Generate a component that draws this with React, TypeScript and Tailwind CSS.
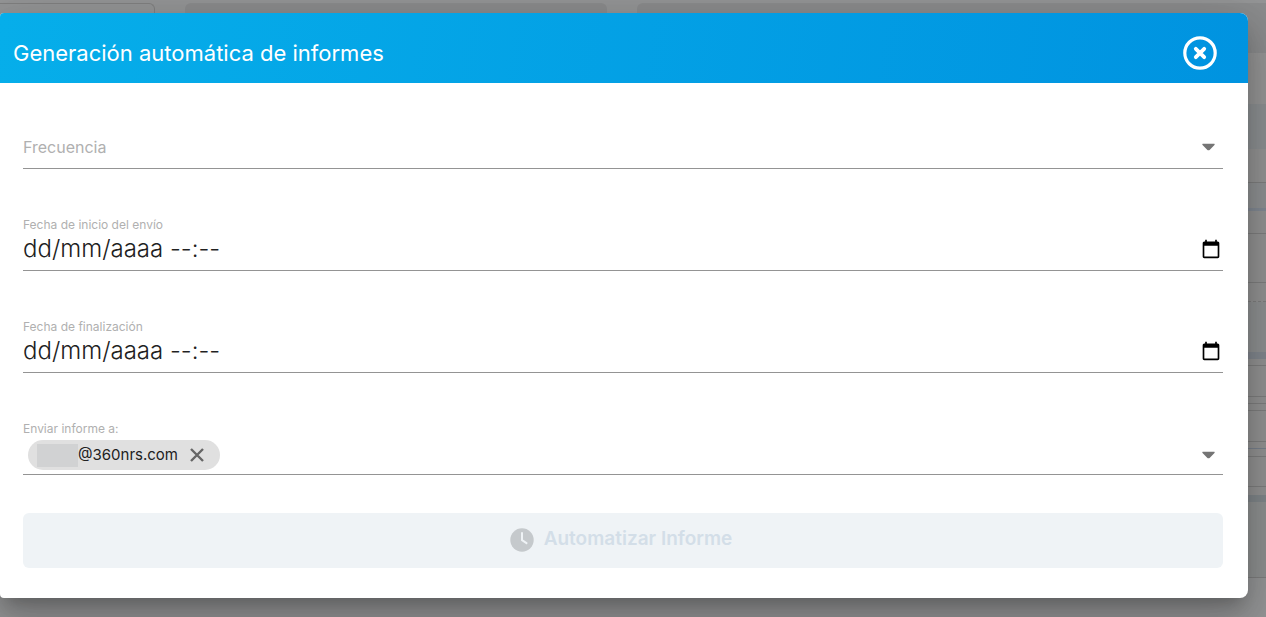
import type { ReactNode } from "react";
import { clsx } from "clsx";

// Strips of the report page that stay visible beside the dialog
const pageStrips = [
  "h-[51px] bg-[#959595]",
  "h-[45px] bg-[#8c8f91]",
  "h-[34px] bg-[#939393] border-b border-[#7e7e7e]",
  "h-[25px] bg-[#8e9092]",
  "h-[3px] bg-[#828993]",
  "h-[23px] bg-[#929292] border-b border-[#7e7e7e]",
  "h-[49px] bg-[#929292] border-b border-[#7e7e7e]",
  "h-[19px] bg-[#929292] border-b border-dashed border-[#7e7e7e]",
  "h-[50px] bg-[#8e9091]",
  "h-[7px] bg-[#82878e]",
  "h-[7px] bg-[#929292] border-b border-[#7e7e7e]",
  "h-[31px] bg-[#929292] border-b border-[#7e7e7e]",
  "h-[7px] bg-[#929292] border-b border-[#7e7e7e]",
  "h-[7px] bg-[#929292] border-b border-[#7e7e7e]",
  "h-[31px] bg-[#929292] border-b border-[#7e7e7e]",
  "h-[7px] bg-[#929292] border-b border-[#78808c]",
  "h-[8px] bg-[#929292] border-b border-[#7e7e7e]",
  "h-[30px] bg-[#929292] border-b border-[#7e7e7e]",
  "h-[8px] bg-[#929292]",
  "h-[7px] bg-[#80868a]",
  "h-[76px] bg-[#8e9090] border-b border-[#7e7e7e]",
];

function PageBehind() {
  return (
    <div aria-hidden="true" className="col-start-1 row-start-1 flex min-w-0 flex-col bg-[#949596] pt-[3px]">
      <div className="flex h-[50px] gap-[30px]">
        <div className="w-[155px] rounded-tr-md border-t border-r border-[#808080]" />
        <div className="w-1/3 rounded-t-md bg-[#8b8c8d]" />
        <div className="flex-1 rounded-tl-md bg-[#8b8c8d]" />
      </div>
      {pageStrips.map((strip, i) => (
        <div key={i} className={clsx("shrink-0", strip)} />
      ))}
    </div>
  );
}

function CaretIcon() {
  return (
    <svg viewBox="0 0 14 8" className="pointer-events-none mr-2 h-2 w-[13px] shrink-0 fill-[#757575]" aria-hidden="true">
      <path d="M1.2 .4h11.6c.9 0 1.2.8.6 1.4L8.2 7.1c-.7.7-1.7.7-2.4 0L.6 1.8C0 1.2.3.4 1.2.4Z" />
    </svg>
  );
}

function CalendarIcon() {
  return (
    <svg viewBox="0 0 24 24" className="h-5 w-5 fill-black" aria-hidden="true">
      <path d="M20 3h-1V1h-2v2H7V1H5v2H4c-1.1 0-2 .9-2 2v16c0 1.1.9 2 2 2h16c1.1 0 2-.9 2-2V5c0-1.1-.9-2-2-2zm0 18H4V8h16v13z" />
    </svg>
  );
}

type FieldProps = {
  id: string;
  label?: string;
  rowClassName?: string;
  children: ReactNode;
};

function Field({ id, label, rowClassName = "h-8", children }: FieldProps) {
  return (
    <div className="flex h-[54px] flex-col border-b border-[#949494]">
      <label htmlFor={id} className="h-4 text-xs leading-4 text-[#b0b0b0]">
        {label}
      </label>
      <div className={clsx("flex items-center", rowClassName)}>{children}</div>
    </div>
  );
}

function DateField({ id, label }: { id: string; label: string }) {
  return (
    <Field id={id} label={label}>
      <input
        id={id}
        type="text"
        placeholder="dd/mm/aaaa --:--"
        className="h-8 min-w-0 flex-1 bg-transparent text-2xl font-light text-[#212121] outline-none placeholder:text-[#212121]"
      />
      <button type="button" aria-label="Abrir calendario" className="mr-0.5">
        <CalendarIcon />
      </button>
    </Field>
  );
}

export default function App() {
  return (
    <div className="grid min-h-screen overflow-hidden font-['Inter','Open_Sans',sans-serif]">
      <PageBehind />
      <div
        role="dialog"
        aria-labelledby="dialog-title"
        className="col-start-1 row-start-1 mt-[13px] mr-[18px] mb-[19px] flex flex-col self-start overflow-hidden rounded-l-sm rounded-r-lg bg-white shadow-[0_11px_15px_-7px_rgba(0,0,0,0.2),0_24px_38px_3px_rgba(0,0,0,0.14),0_9px_46px_8px_rgba(0,0,0,0.12)]"
      >
        <header className="flex h-[70px] items-center justify-between bg-linear-[100deg] from-[#06aeea] to-[#0093e0] pt-3 pr-[31px] pb-0.5 pl-[13px] text-white">
          <h1 id="dialog-title" className="text-[22px] leading-8">
            Generación automática de informes
          </h1>
          <button type="button" aria-label="Cerrar">
            <svg viewBox="0 0 34 34" className="h-[34px] w-[34px]" fill="none" stroke="currentColor" aria-hidden="true">
              <circle cx="17" cy="17" r="15.2" strokeWidth="3.2" />
              <path d="m12.8 12.8 8.4 8.4m0-8.4-8.4 8.4" strokeWidth="3.8" strokeLinecap="round" />
            </svg>
          </button>
        </header>

        <form className="flex flex-col gap-12 pt-8 pr-[25px] pb-[30px] pl-[23px]">
          <Field id="frequency">
            <select
              id="frequency"
              aria-label="Frecuencia"
              defaultValue=""
              className="h-8 flex-1 appearance-none bg-transparent text-base text-[#b0b0b0] outline-none"
            >
              <option value="">Frecuencia</option>
            </select>
            <CaretIcon />
          </Field>

          <DateField id="start-date" label="Fecha de inicio del envío" />
          <DateField id="end-date" label="Fecha de finalización" />

          <div className="flex flex-col gap-[38px]">
            <Field id="recipients" label="Enviar informe a:" rowClassName="h-9">
              <span className="ml-[5px] flex h-[30px] items-center rounded-full bg-[#e0e0e0] pr-4 pl-[9px] text-[15px] text-[#212121]">
                <span className="h-[23px] w-[41px] bg-[#d1d2d3]" />
                @360nrs.com
                <button type="button" aria-label="Quitar destinatario" className="ml-3">
                  <svg viewBox="0 0 14 14" className="h-[14px] w-[14px]" stroke="#666" strokeWidth="2.4" aria-hidden="true">
                    <path d="m1 1 12 12M13 1 1 13" />
                  </svg>
                </button>
              </span>
              <select id="recipients" defaultValue="" className="h-8 flex-1 appearance-none bg-transparent outline-none">
                <option value=""></option>
              </select>
              <CaretIcon />
            </Field>

            <button
              type="submit"
              disabled
              className="flex h-[55px] items-center justify-center gap-2.5 rounded-md bg-[#eff3f6] pr-1 pb-0.5 text-[19px] font-semibold text-[#d3dee8]"
            >
              <svg viewBox="0 0 24 24" className="h-6 w-6" aria-hidden="true">
                <circle cx="12" cy="12" r="11.7" fill="#c5c9cc" />
                <path d="M12 5v7.2l4.5 3" fill="none" stroke="#eff3f6" strokeWidth="2" strokeLinecap="round" strokeLinejoin="round" />
              </svg>
              Automatizar Informe
            </button>
          </div>
        </form>
      </div>
    </div>
  );
}
